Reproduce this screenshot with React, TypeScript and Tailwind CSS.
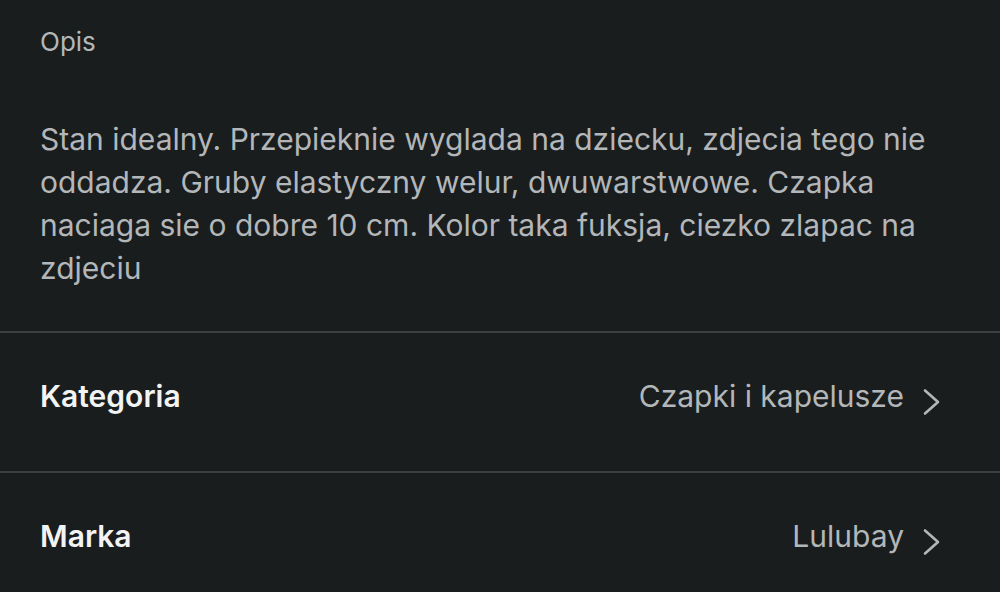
function Chevron() {
  return (
    <svg width="20" height="28" viewBox="0 0 20 28" fill="none" className="ml-[18px] mt-3">
      <path d="M3 2.5 L16 14 L3 25.5" stroke="#b3b7b9" strokeWidth="2.6" strokeLinecap="round" strokeLinejoin="round" />
    </svg>
  );
}

function Row({ label, value }: { label: string; value: string }) {
  return (
    <div className="flex h-[140px] items-center justify-between border-t-2 border-[#3b3f41] pb-3 pl-10 pr-[58px]">
      <span className="text-[30px] font-semibold text-[#f2f3f3]">{label}</span>
      <span className="flex items-center text-[30px] text-[#b3b7b9]">
        {value}
        <Chevron />
      </span>
    </div>
  );
}

export default function App() {
  return (
    <div className="h-[592px] w-[1000px] overflow-hidden bg-[#1a1d1e] font-['Inter',sans-serif]">
      <div className="px-10 pt-[26px]">
        <p className="text-[26px] leading-8 text-[#b3b7b9]">Opis</p>
        <p className="mt-[60px] text-[30px] leading-[43px] text-[#b3b7b9]">
          Stan idealny. Przepieknie wyglada na dziecku, zdjecia tego nie oddadza. Gruby elastyczny welur, dwuwarstwowe. Czapka naciaga sie o dobre 10 cm. Kolor taka fuksja, ciezko zlapac na zdjeciu
        </p>
      </div>
      <div className="mt-[41px]">
        <Row label="Kategoria" value="Czapki i kapelusze" />
        <Row label="Marka" value="Lulubay" />
      </div>
    </div>
  );
}
